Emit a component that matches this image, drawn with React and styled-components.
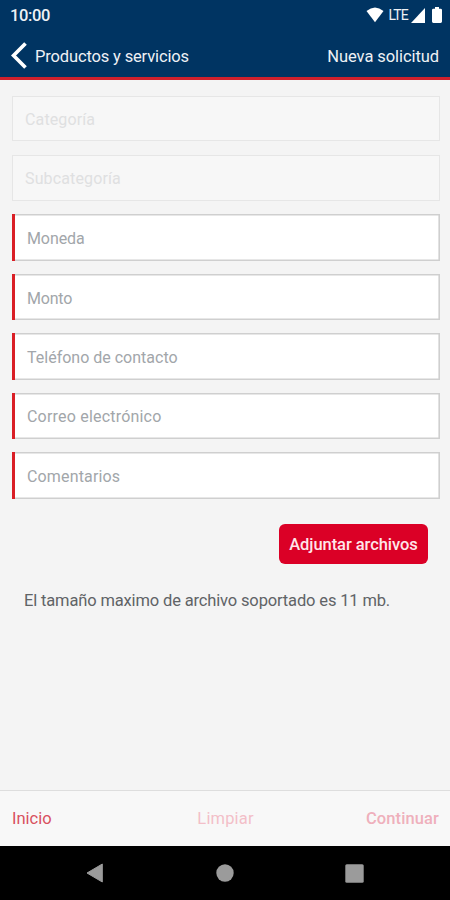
import React from "react";
import styled, { createGlobalStyle } from "styled-components";

const fields = [
  { label: "Categoría", disabled: true, spacing: 0.13 },
  { label: "Subcategoría", disabled: true, spacing: 0.13 },
  { label: "Moneda", spacing: -0.1 },
  { label: "Monto", spacing: -0.2 },
  { label: "Teléfono de contacto", spacing: 0 },
  { label: "Correo electrónico", spacing: 0.2 },
  { label: "Comentarios", spacing: 0.15 },
];

function App() {
  return (
    <Screen>
      <GlobalStyle />
      <Header>
        <StatusBar>
          <Clock>10:00</Clock>
          <StatusIcons>
            <svg width="18" height="16" viewBox="0 0 18 16">
              <path d="M.5 4Q9-3 17.5 4L9 15.2Z" fill="#fff" />
            </svg>
            <Network>LTE</Network>
            <svg width="14" height="15" viewBox="0 0 14 15">
              <path d="M14 0V15H0Z" fill="#fff" />
            </svg>
            <Battery width="10" height="16" viewBox="0 0 10 16">
              <path
                d="M3 0H7V1.7H8.6Q10 1.7 10 3V14.6Q10 16 8.6 16H1.4Q0 16 0 14.6V3Q0 1.7 1.4 1.7H3Z"
                fill="#fff"
              />
            </Battery>
          </StatusIcons>
        </StatusBar>
        <TitleBar>
          <Back>
            <svg width="17" height="27" viewBox="0 0 17 27">
              <path
                d="M14.5 1.5L2.5 13.5L14.5 25.5"
                fill="none"
                stroke="#fff"
                strokeWidth="3.7"
              />
            </svg>
            <Title $spacing={-0.15}>Productos y servicios</Title>
          </Back>
          <Title $spacing={-0.08}>Nueva solicitud</Title>
        </TitleBar>
      </Header>
      <Form>
        <Fields>
          {fields.map((field) => (
            <Field key={field.label} $disabled={field.disabled}>
              <Label $spacing={field.spacing}>{field.label}</Label>
            </Field>
          ))}
        </Fields>
        <AttachButton>Adjuntar archivos</AttachButton>
        <Hint>El tamaño maximo de archivo soportado es 11 mb.</Hint>
      </Form>
      <Footer>
        <Action $color="#d8515f">Inicio</Action>
        <Action $color="#f3bfc8" $spacing={0.15}>
          Limpiar
        </Action>
        <Action $color="#efb0bc" $spacing={0.1} $bold $end>
          Continuar
        </Action>
      </Footer>
      <NavBar>
        <svg width="18" height="20" viewBox="0 0 18 20">
          <path d="M16.3 1V19L1 10Z" fill="#9b9b9b" stroke="#9b9b9b" />
        </svg>
        <svg width="18" height="18" viewBox="0 0 18 18">
          <circle cx="9" cy="9" r="8.7" fill="#9b9b9b" />
        </svg>
        <svg width="19" height="19" viewBox="0 0 19 19">
          <rect x=".3" y=".3" width="18.4" height="18.4" rx="1.5" fill="#9b9b9b" />
        </svg>
      </NavBar>
    </Screen>
  );
}

const GlobalStyle = createGlobalStyle`
  * {
    box-sizing: border-box;
  }
  body {
    margin: 0;
    font-family: Roboto, "Liberation Sans", sans-serif;
  }
  svg {
    display: block;
    flex-shrink: 0;
  }
`;
const Screen = styled.div`
  width: 450px;
  height: 900px;
  display: flex;
  flex-direction: column;
  overflow: hidden;
  background: #f4f4f4;
  white-space: nowrap;
`;
const Header = styled.header`
  height: 80px;
  background: #003462;
  border-bottom: 3px solid #cf202c;
  color: #eef1f5;
`;
const StatusBar = styled.div`
  height: 30px;
  padding: 0 8px 0 10px;
  display: flex;
  align-items: center;
  justify-content: space-between;
`;
const Clock = styled.span`
  font-size: 16.5px;
  font-weight: 500;
  letter-spacing: -0.4px;
`;
const StatusIcons = styled.div`
  display: flex;
  align-items: center;
`;
const Network = styled.span`
  margin: 0 3px 0 4px;
  font-size: 14px;
  letter-spacing: -0.8px;
`;
const Battery = styled.svg`
  margin-left: 7px;
`;
const TitleBar = styled.div`
  height: 47px;
  padding: 4px 11px 0;
  display: flex;
  align-items: center;
  justify-content: space-between;
`;
const Back = styled.div`
  display: flex;
  align-items: center;
  gap: 7px;
`;
const Title = styled.span`
  padding-top: 2px;
  font-size: 16.5px;
  letter-spacing: ${(props) => props.$spacing}px;
`;
const Form = styled.main`
  flex: 1;
  padding: 15.6px 10px 0 12px;
  display: flex;
  flex-direction: column;
`;
const Fields = styled.div`
  display: grid;
  grid-auto-rows: 46.6px;
  gap: 12.8px;
`;
const Field = styled.div`
  height: ${(props) => (props.$disabled ? "45.6px" : "46.6px")};
  padding-left: 12px;
  display: flex;
  align-items: center;
  background: ${(props) => (props.$disabled ? "#f7f7f7" : "#fff")};
  border: ${(props) => (props.$disabled ? "1px solid #e6e6e6" : "none")};
  border-left: ${(props) => (props.$disabled ? "1px solid #e6e6e6" : "3px solid #da1f26")};
  box-shadow: ${(props) =>
    props.$disabled
      ? "none"
      : "inset 0 1.6px #cfcfcf, inset 0 -1.6px #cfcfcf, inset -1.6px 0 #cfcfcf"};
  color: ${(props) => (props.$disabled ? "#dfe0e1" : "#a2a6aa")};
`;
const Label = styled.span`
  padding-top: 2px;
  font-size: 16px;
  letter-spacing: ${(props) => props.$spacing}px;
`;
const AttachButton = styled.button`
  align-self: flex-end;
  width: 149px;
  height: 40px;
  margin: 25px 12px 0 0;
  padding: 2px 0 0;
  border: none;
  border-radius: 6px;
  background: #db0026;
  color: #ffe6e9;
  font-family: inherit;
  font-size: 16.5px;
  font-weight: 500;
  letter-spacing: -0.06px;
`;
const Hint = styled.p`
  margin: 27px 0 0 12px;
  font-size: 16.5px;
  line-height: 20px;
  letter-spacing: -0.15px;
  color: #606366;
`;
const Footer = styled.footer`
  height: 56px;
  padding: 0 11px 0 12px;
  display: grid;
  grid-template-columns: 1fr auto 1fr;
  align-items: center;
  background: #f8f8f8;
  border-top: 1px solid #dedede;
`;
const Action = styled.span`
  justify-self: ${(props) => (props.$end ? "end" : "start")};
  font-size: 16.5px;
  font-weight: ${(props) => (props.$bold ? 500 : 400)};
  letter-spacing: ${(props) => props.$spacing || 0}px;
  color: ${(props) => props.$color};
`;
const NavBar = styled.nav`
  height: 54px;
  padding: 0 86px 0 86px;
  display: flex;
  align-items: center;
  justify-content: space-between;
  background: #000;
`;
export default App;
